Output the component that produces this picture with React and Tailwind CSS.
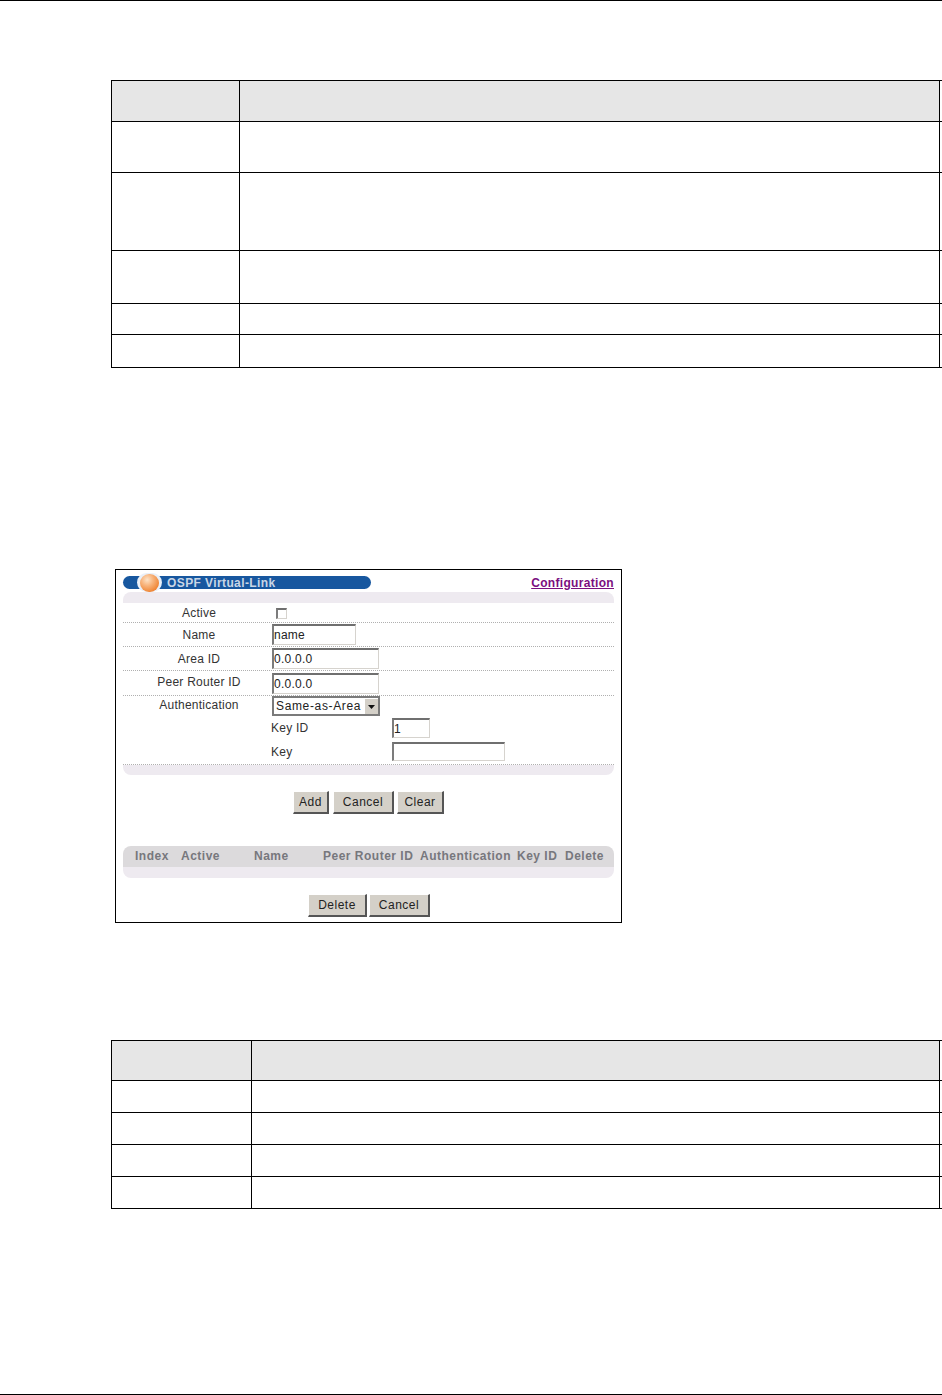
const sans = "font-['Liberation_Sans',Arial,sans-serif]";

function DocTable({ col, rows }) {
  return (
    <div className="ml-[111px] w-[831px] border-t border-black">
      {rows.map((h, i) => (
        <div key={i} className="flex border-b border-black mr-0" style={{ height: h }}>
          <div className={`shrink-0 border-l border-black ${i === 0 ? "bg-[#e6e6e6]" : ""}`} style={{ width: col }} />
          <div className={`flex-1 border-l border-r border-black mr-[2px] ${i === 0 ? "bg-[#e6e6e6]" : ""}`} />
        </div>
      ))}
    </div>
  );
}

const inputCls =
  "block bg-white border-t-2 border-l-2 border-r border-b border-t-[#6f6f6f] border-l-[#7c7c7c] border-r-[#d6d3ce] border-b-[#d6d3ce] pl-0 text-[12px] leading-none text-[#222] outline-none tracking-[0.25px]";

const btnCls =
  "h-[23px] bg-[#d4d0c8] border-t border-l border-r-2 border-b-2 border-t-white border-l-white border-r-[#555] border-b-[#555] text-[12px] leading-none text-[#222] tracking-[0.5px] p-0 pb-px";

function Row({ label, children, h, line = true, lift = false }) {
  return (
    <div className={`flex items-center ${line ? "border-b border-dotted border-[#b0b0b0]" : ""} ${h}`}>
      <div className={`w-[149px] pl-[3px] text-center text-[12px] tracking-[0.25px] text-[#333] ${lift ? "pb-[2px]" : ""}`}>{label}</div>
      {children}
    </div>
  );
}

function Orb() {
  return (
    <div className="absolute left-[14px] top-[-3px] w-[25px] h-[19px] rounded-full bg-[#eaf0f8] flex items-center justify-center">
      <div className="w-[19px] h-[18px] rounded-full bg-[radial-gradient(circle_at_38%_32%,#fde3c8_0%,#f8b47c_35%,#ef8433_75%,#e06a1c_100%)]" />
    </div>
  );
}

function Panel() {
  return (
    <div className={`ml-[115px] mt-[201px] w-[507px] h-[354px] border border-black px-[7px] pt-[6px] ${sans}`}>
      <div className="flex items-center justify-between h-[13px]">
        <div className="relative w-[248px] h-[13px] rounded-full bg-[#17579f] pl-[44px] flex items-center">
          <Orb />
          <span className="text-[12px] font-bold leading-none tracking-[0.4px] text-[#c9d6e6]">OSPF Virtual-Link</span>
        </div>
        <a className="text-[12px] font-bold underline text-[#7b0f80] tracking-[0.32px]">Configuration</a>
      </div>

      <div className="mt-[3px] h-[11px] rounded-t-[8px] bg-[#eeeaf0]" />

      <Row label="Active" h="h-[20px]">
        <input type="checkbox" readOnly className="appearance-none ml-[4px] mt-[1px] w-[11px] h-[11px] bg-white border-t-2 border-l-2 border-r border-b border-t-[#6f6f6f] border-l-[#7c7c7c] border-r-[#d6d3ce] border-b-[#d6d3ce]" />
      </Row>
      <Row label="Name" h="h-[24px]">
        <input readOnly defaultValue="name" className={`${inputCls} w-[84px] h-[21px]`} />
      </Row>
      <Row label="Area ID" h="h-[24px]">
        <input readOnly defaultValue="0.0.0.0" className={`${inputCls} w-[107px] h-[21px]`} />
      </Row>
      <Row label="Peer Router ID" h="h-[25px]" lift>
        <input readOnly defaultValue="0.0.0.0" className={`${inputCls} w-[107px] h-[21px]`} />
      </Row>

      <div className="h-[69px] border-b border-dotted border-[#b0b0b0]">
        <Row label="Authentication" h="h-[20px]" line={false} lift>
          <div className="w-[108px] h-[20px] flex items-center justify-between border-2 border-[#7b7b7b] bg-white pl-[2px] text-[12px] leading-none tracking-[0.65px] text-[#222] whitespace-nowrap">
            <span>Same-as-Area</span>
            <span className="w-[14px] h-[16px] shrink-0 bg-[#d4d0c8] border-t border-l border-white flex items-center justify-center">
              <svg width="7" height="4" viewBox="0 0 7 4"><path d="M0 0h7L3.5 4z" fill="#111" /></svg>
            </span>
          </div>
        </Row>
        <div className="flex items-center h-[24px] pl-[148px] text-[12px] tracking-[0.25px] text-[#333]">
          <span className="w-[121px]">Key ID</span>
          <input readOnly defaultValue="1" className={`${inputCls} w-[38px] h-[20px]`} />
        </div>
        <div className="flex items-center h-[23px] pl-[148px] text-[12px] tracking-[0.25px] text-[#333]">
          <span className="w-[121px]">Key</span>
          <input readOnly className={`${inputCls} w-[113px] h-[19px]`} />
        </div>
      </div>

      <div className="h-[10px] rounded-b-[8px] bg-[#eeeaf0]" />

      <div className="mt-[16px] pl-[170px] flex">
        <button className={`${btnCls} w-[36px] mr-[4px]`}>Add</button>
        <button className={`${btnCls} w-[61px] mr-[3px]`}>Cancel</button>
        <button className={`${btnCls} w-[47px]`}>Clear</button>
      </div>

      <div className="mt-[32px] h-[21px] rounded-t-[8px] bg-[#dcdadc] grid grid-cols-[46px_73px_69px_97px_97px_48px_1fr] pl-[12px] pb-px items-center text-[12px] font-bold tracking-[0.5px] text-[#77777d] whitespace-nowrap">
        <span>Index</span>
        <span>Active</span>
        <span>Name</span>
        <span>Peer Router ID</span>
        <span>Authentication</span>
        <span>Key ID</span>
        <span>Delete</span>
      </div>
      <div className="h-[11px] rounded-b-[8px] bg-[#eeeaf0]" />

      <div className="mt-[16px] pl-[185px] flex gap-[2px]">
        <button className={`${btnCls} w-[59px]`}>Delete</button>
        <button className={`${btnCls} w-[61px]`}>Cancel</button>
      </div>
    </div>
  );
}

export default function App() {
  return (
    <div className="w-[942px] h-[1395px] bg-white flex flex-col overflow-hidden">
      <div className="h-px bg-black shrink-0" />
      <div className="mt-[79px]">
        <DocTable col={128} rows={[41, 51, 78, 53, 31, 33]} />
      </div>
      <Panel />
      <div className="mt-[117px]">
        <DocTable col={140} rows={[40, 32, 32, 32, 32]} />
      </div>
      <div className="mt-auto h-px bg-black shrink-0" />
    </div>
  );
}
